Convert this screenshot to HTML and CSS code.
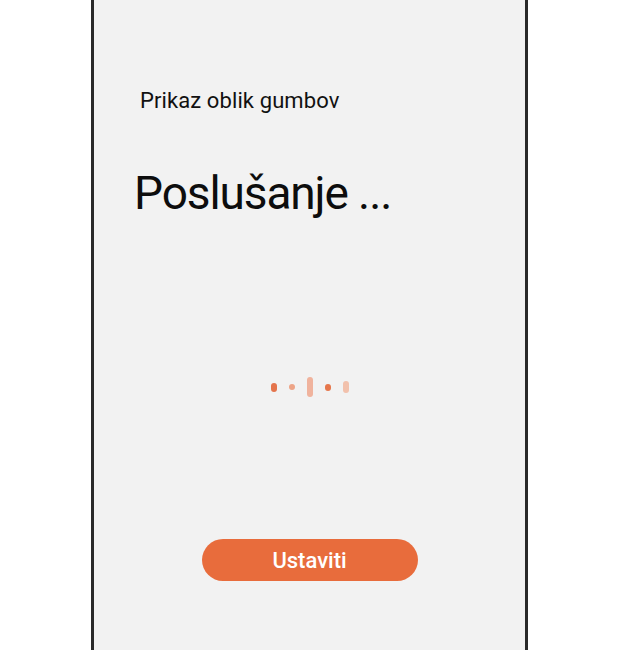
FILE: index.html
```html
<!DOCTYPE html>
<html lang="sl">
<head>
<meta charset="utf-8">
<title>Poslušanje</title>
<link rel="stylesheet" href="styles.css">
</head>
<body>
<div class="phone">
  <div class="screen">
    <div class="caption">Prikaz oblik gumbov</div>
    <h1 class="title">Poslušanje ...</h1>
    <div class="wave">
      <span class="bar b1"></span>
      <span class="bar b2"></span>
      <span class="bar b3"></span>
      <span class="bar b4"></span>
      <span class="bar b5"></span>
    </div>
    <div class="actions">
      <button class="stop">Ustaviti</button>
    </div>
  </div>
</div>
</body>
</html>
```

FILE: styles.css
```css
html, body {
  margin: 0;
  padding: 0;
  background: #ffffff;
}
body {
  font-family: Roboto, "Noto Sans", sans-serif;
  height: 650px;
  overflow: hidden;
}
.phone {
  margin-left: 91px;
  width: 431px;
  height: 650px;
  border-left: 3px solid #2a2a2a;
  border-right: 3px solid #2a2a2a;
  background: #f2f2f2;
}
.screen {
  display: flex;
  flex-direction: column;
  height: 100%;
}
.caption {
  margin: 86px 0 0 46px;
  font-size: 22px;
  line-height: 30px;
  letter-spacing: 0.1px;
  color: #111;
}
.title {
  margin: 49px 0 0 40px;
  font-size: 46px;
  line-height: 56px;
  font-weight: 400;
  letter-spacing: -1.1px;
  color: #0d0d0d;
}
.wave {
  margin-top: 154px;
  height: 24px;
  display: flex;
  justify-content: center;
  align-items: center;
  gap: 12px;
}
.bar {
  width: 6px;
  border-radius: 3px;
}
.b1 { height: 9px; background: #e4744c; }
.b2 { height: 6px; background: #eda487; }
.b3 { height: 20px; background: #f0b39d; }
.b4 { height: 7px; background: #e6774c; }
.b5 { height: 12px; background: #f2c1ac; }
.actions {
  margin-top: 140px;
  display: flex;
  justify-content: center;
}
.stop {
  width: 216px;
  height: 42px;
  border: none;
  border-radius: 21px;
  background: #e86c3c;
  color: #ffffff;
  font-family: Roboto, "Noto Sans", sans-serif;
  font-size: 22px;
  font-weight: 500;
  letter-spacing: 0;
  padding: 0;
}
```
